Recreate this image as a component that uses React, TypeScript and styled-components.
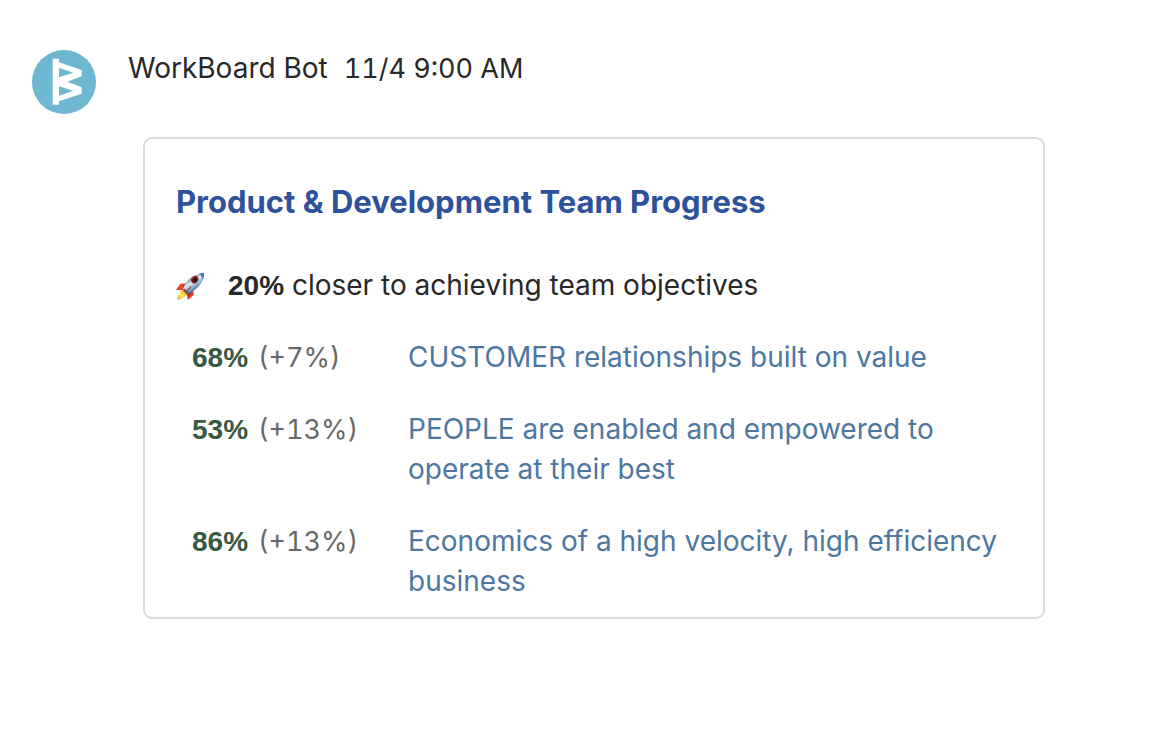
import React from "react";
import styled, { createGlobalStyle } from "styled-components";

const GlobalStyle = createGlobalStyle`
  * { box-sizing: border-box; }
  body {
    margin: 0;
    background: #fff;
    color: #282828;
    font-family: Inter, "Liberation Sans", sans-serif;
    font-size: 28px;
    line-height: 40px;
  }
`;

const Message = styled.article`
  display: flex;
  align-items: flex-start;
  gap: 32px;
  padding: 48px 115px 48px 32px;
`;

const Avatar = styled.svg`
  flex: none;
  width: 64px;
  height: 64px;
  margin-top: 2px;
`;

const Content = styled.div`
  flex: 1;
  min-width: 0;
`;

const Meta = styled.header`
  display: flex;
  flex-wrap: wrap;
  align-items: baseline;
  gap: 16px;
`;

const Timestamp = styled.time`
  font-size: 27px;
  font-variant-numeric: tabular-nums;
`;

const Card = styled.section`
  margin: 48px 0 0 15px;
  padding: 43px 30px 16px 31px;
  border: 2px solid #dadbdc;
  border-radius: 9px;
`;

const Title = styled.h2`
  margin: 0 0 43px;
  color: #2c529c;
  font-size: 31px;
  font-weight: 700;
`;

const Summary = styled.p`
  display: flex;
  align-items: center;
  gap: 22px;
  margin: 0;
`;

const RocketIcon = styled.svg`
  flex: none;
  width: 30px;
  height: 30px;
`;

const Objectives = styled.table`
  width: 100%;
  border-collapse: collapse;
`;

const ProgressCell = styled.td`
  width: 232px;
  padding: 32px 0 0 16px;
  vertical-align: top;
  white-space: nowrap;
`;

const NameCell = styled.th`
  padding: 32px 0 0;
  font-weight: 400;
  text-align: left;
  vertical-align: top;
`;

const Figure = styled.strong`
  font-family: "Liberation Sans", Arial, sans-serif;
  font-weight: 700;
  line-height: 1;
`;

const Percent = styled(Figure)`
  margin-right: 10px;
  color: #37593f;
`;

const Change = styled.span`
  color: #686868;
  font-size: 27px;
  font-variant-numeric: tabular-nums;
  line-height: 1;
`;

const ObjectiveLink = styled.a`
  color: #4d779f;
  text-decoration: none;
`;

const objectives = [
  { percent: "68%", change: "(+7%)", name: "CUSTOMER relationships built on value" },
  { percent: "53%", change: "(+13%)", name: "PEOPLE are enabled and empowered to operate at their best" },
  { percent: "86%", change: "(+13%)", name: "Economics of a high velocity, high efficiency business" },
];

function Logo() {
  return (
    <Avatar viewBox="0 0 192 192" aria-hidden="true">
      <circle cx="96" cy="96" r="96" fill="#6db7d1" />
      <path
        fill="#fff"
        fillRule="evenodd"
        d="M62 26H81V37L149 60V79L106 95L149 112V131L81 154V164H62ZM81 54V82L124 68ZM81 109V137L124 122Z"
      />
    </Avatar>
  );
}

function Rocket() {
  return (
    <RocketIcon viewBox="24 16 90 90" aria-hidden="true">
      <defs>
        <linearGradient id="body" x1="60" y1="40" x2="86" y2="78" gradientUnits="userSpaceOnUse">
          <stop offset="0" stopColor="#6585aa" />
          <stop offset=".4" stopColor="#dbe6f0" />
          <stop offset=".7" stopColor="#7fa8d0" />
          <stop offset="1" stopColor="#36567f" />
        </linearGradient>
        <linearGradient id="flame" x1="54" y1="78" x2="28" y2="106" gradientUnits="userSpaceOnUse">
          <stop offset="0" stopColor="#f39a24" />
          <stop offset=".5" stopColor="#ffe56a" />
          <stop offset="1" stopColor="#f6a33c" />
        </linearGradient>
      </defs>
      <path fill="#e5432c" d="M57 56L37 57L24 76L47 77Z" />
      <path fill="#9f2a22" d="M57 56L46 63L44 76L49 77Z" />
      <path fill="#e33a26" d="M76 76L77 91L59 106L57 88Z" />
      <path fill="#b92b22" d="M76 76L68 90L59 96L57 88Z" />
      <path fill="url(#flame)" d="M45 76C34 81 29 91 27 106C42 102 55 97 59 87Z" />
      <path fill="url(#body)" d="M44 76C50 53 68 30 108 24C110 45 95 70 60 89Z" />
      <path fill="#4c79ac" d="M94 26L108 24C109 33 107 39 104 46C102 38 99 32 94 26Z" />
      <path fill="#5b4b4e" d="M44 76L49 72L64 86L59 91Z" />
      <ellipse cx="80" cy="45" rx="12" ry="10" fill="#a52b2b" transform="rotate(-40 80 45)" />
      <ellipse cx="81" cy="46" rx="8" ry="7" fill="#25171c" transform="rotate(-40 81 46)" />
      <path stroke="#c63c32" strokeWidth="4" strokeLinecap="round" d="M68 67L56 80" />
    </RocketIcon>
  );
}

export default function App() {
  return (
    <>
      <GlobalStyle />
      <Message>
        <Logo />
        <Content>
          <Meta>
            <span>WorkBoard Bot</span>
            <Timestamp>11/4 9:00 AM</Timestamp>
          </Meta>
          <Card>
            <Title>Product &amp; Development Team Progress</Title>
            <Summary>
              <Rocket />
              <span>
                <Figure>20%</Figure> closer to achieving team objectives
              </span>
            </Summary>
            <Objectives>
              <tbody>
                {objectives.map((objective) => (
                  <tr key={objective.name}>
                    <ProgressCell>
                      <Percent>{objective.percent}</Percent>
                      <Change>{objective.change}</Change>
                    </ProgressCell>
                    <NameCell scope="row">
                      <ObjectiveLink href="#">{objective.name}</ObjectiveLink>
                    </NameCell>
                  </tr>
                ))}
              </tbody>
            </Objectives>
          </Card>
        </Content>
      </Message>
    </>
  );
}
